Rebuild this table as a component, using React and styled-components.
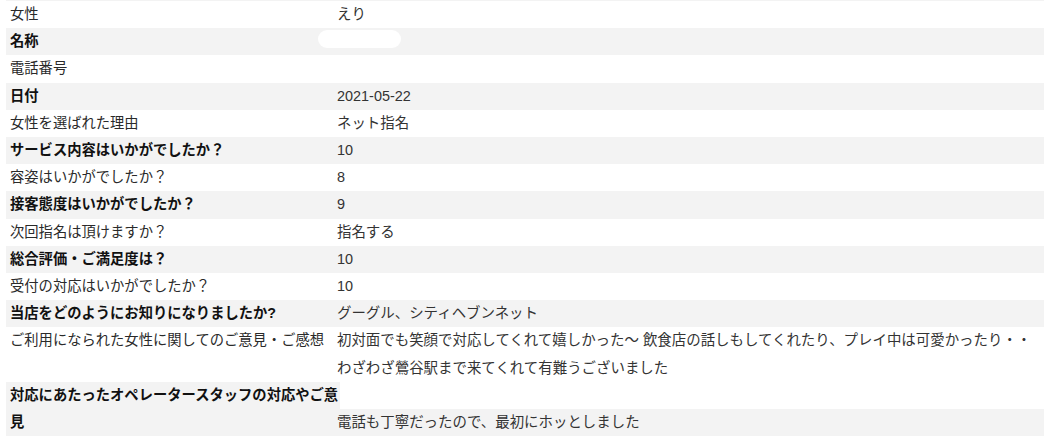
import React from "react";
import styled, { createGlobalStyle } from "styled-components";

const GlobalStyle = createGlobalStyle`
  html, body {
    margin: 0;
    padding: 0;
    background: #ffffff;
  }
  body {
    font-family: "Liberation Sans", "Noto Sans CJK JP", sans-serif;
    font-size: 14.3px;
    color: #333;
  }
`;

const Sheet = styled.div`
  display: grid;
  grid-template-columns: 334px 1fr;
  margin-left: 6px;
  border-top: 1px solid #f3f3f3;
  line-height: 27.2px;
  overflow: hidden;
`;

const Label = styled.div`
  padding-left: 4px;
  background: ${(p) => (p.$shaded ? "#f3f3f3" : "#ffffff")};
  font-weight: ${(p) => (p.$shaded ? 700 : 400)};
  color: ${(p) => (p.$shaded ? "#111" : "#2a2a2a")};
  word-break: break-all;
`;

const Value = styled.div`
  position: relative;
  margin-left: -3px;
  align-self: end;
  min-height: 27.2px;
  font-size: 14.45px;
  background: ${(p) => (p.$shaded ? "#f3f3f3" : "#ffffff")};
  color: #333;
  white-space: nowrap;
`;

const Mask = styled.span`
  position: absolute;
  left: -19px;
  top: 2px;
  width: 83px;
  height: 18px;
  border-radius: 9px;
  background: #ffffff;
`;

const rows = [
  { label: "女性", value: "えり" },
  { label: "名称", value: "", masked: true },
  { label: "電話番号", value: "" },
  { label: "日付", value: "2021-05-22" },
  { label: "女性を選ばれた理由", value: "ネット指名" },
  { label: "サービス内容はいかがでしたか？", value: "10" },
  { label: "容姿はいかがでしたか？", value: "8" },
  { label: "接客態度はいかがでしたか？", value: "9" },
  { label: "次回指名は頂けますか？", value: "指名する" },
  { label: "総合評価・ご満足度は？", value: "10" },
  { label: "受付の対応はいかがでしたか？", value: "10" },
  { label: "当店をどのようにお知りになりましたか?", value: "グーグル、シティヘブンネット" },
  {
    label: "ご利用になられた女性に関してのご意見・ご感想",
    value: [
      "初対面でも笑顔で対応してくれて嬉しかった～ 飲食店の話しもしてくれたり、プレイ中は可愛かったり・・",
      "わざわざ鶯谷駅まで来てくれて有難うございました",
    ],
  },
  {
    label: "対応にあたったオペレータースタッフの対応やご意見",
    value: "電話も丁寧だったので、最初にホッとしました",
  },
];

export default function App() {
  return (
    <>
      <GlobalStyle />
      <Sheet>
        {rows.map((row, i) => {
          const shaded = i % 2 === 1;
          return (
            <React.Fragment key={row.label}>
              <Label $shaded={shaded}>{row.label}</Label>
              <Value $shaded={shaded}>
                {Array.isArray(row.value)
                  ? row.value.map((line, j) => (
                      <React.Fragment key={j}>
                        {j > 0 && <br />}
                        {line}
                      </React.Fragment>
                    ))
                  : row.value}
                {row.masked && <Mask />}
              </Value>
            </React.Fragment>
          );
        })}
      </Sheet>
    </>
  );
}
